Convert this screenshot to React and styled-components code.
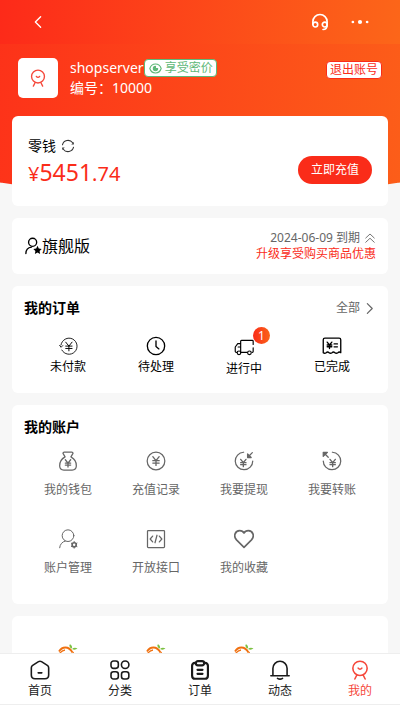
import React from "react";
import styled, { createGlobalStyle } from "styled-components";

function Yen({ x = 12, y = 12, s = 1, w = 1.3 }) {
  return (
    <path
      d="M-4 -5 L0 0 L4 -5 M0 0 V6 M-4 0 H4 M-4 3 H4"
      transform={`translate(${x} ${y}) scale(${s})`}
      strokeWidth={w / s}
    />
  );
}

const icons = {
  back: <path d="M15.5 5 L8.5 12 L15.5 19" />,
  more: (
    <g fill="currentColor" stroke="none">
      <circle cx="2.5" cy="12" r="1.8" />
      <circle cx="12" cy="12" r="2.8" />
      <circle cx="21.5" cy="12" r="1.8" />
    </g>
  ),
  headset: (
    <>
      <path d="M2.5 15 V11.5 A9.5 9.5 0 0 1 21.5 11.5 V16 C21.5 19.5 19.5 22 16 22" />
      <circle cx="5.7" cy="15.4" r="3.2" />
      <circle cx="18.3" cy="15.4" r="3.2" />
    </>
  ),
  mine: (
    <>
      <circle cx="12" cy="10" r="8.6" />
      <path d="M9.8 9.8 C11 11.6 13 11.6 14.2 9.8 M8.2 18 L5.8 22.8 M15.8 18 L18.2 22.8" />
    </>
  ),
  eye: (
    <>
      <path d="M1.5 12 C5 1 19 1 22.5 12 C19 23 5 23 1.5 12 Z" />
      <path d="M12 8 A4 4 0 1 0 16 12 H12 Z" fill="currentColor" />
    </>
  ),
  refresh: (
    <>
      <path d="M2.5 10 A9.8 9.8 0 0 1 20 6.5 M21.5 14 A9.8 9.8 0 0 1 4 17.5" />
      <path d="M22 5 V9.6 H17.6 Z M2 19 V14.4 H6.4 Z" fill="currentColor" stroke="none" />
    </>
  ),
  member: (
    <>
      <circle cx="11.5" cy="7" r="5.4" />
      <path d="M2.5 22 C2.5 17 5.5 14 10 13.4" />
      <path
        d="M18 11.8 L19.7 15.4 L23.6 15.9 L20.8 18.6 L21.5 22.6 L18 20.7 L14.5 22.6 L15.2 18.6 L12.4 15.9 L16.3 15.4 Z"
        fill="currentColor"
        stroke="none"
      />
    </>
  ),
  doubleUp: <path d="M3.5 12 L12 4 L20.5 12 M3.5 20.5 L12 12.5 L20.5 20.5" />,
  right: <path d="M8 3 L17 12 L8 21" />,
  unpaid: (
    <>
      <path d="M2.5 10 A10.2 10.2 0 1 1 3.6 16.5 M0.8 10.5 L2.6 13 L4.8 10.8" />
      <Yen x={12.5} y={11.5} w={1.2} />
    </>
  ),
  clock: (
    <>
      <circle cx="12" cy="12" r="10.4" />
      <path d="M12 6 V12.5 L15.5 15.5" />
    </>
  ),
  truck: (
    <>
      <path d="M8 18.5 V5 Q8 4 9 4 H22 Q23 4 23 5 V9 M23 13 V17.5 Q23 18.5 22 18.5 M8 8 H4.5 L1.5 12 V17.5 Q1.5 18.5 3 18.5 M9 18.5 H15.5 M5 12 H7" />
      <circle cx="6" cy="19" r="2.2" />
      <circle cx="18.5" cy="19" r="2.2" />
    </>
  ),
  receipt: (
    <>
      <path d="M1.5 20 V4.5 Q1.5 2.5 3.5 2.5 H20.5 Q22.5 2.5 22.5 4.5 V20 Q20.7 18.5 19 20 Q17.2 21.5 15.5 20 Q13.7 18.5 12 20 Q10.2 21.5 8.5 20 Q6.7 18.5 5 20 Q3.2 21.5 1.5 20 Z" />
      <Yen x={9} y={10.8} s={0.7} w={1.6} />
      <path d="M14.5 9.5 H18.5 M14.5 13 H18.5" />
    </>
  ),
  wallet: (
    <>
      <path d="M8.5 7 L6 2.8 Q6 1.2 7.5 1.2 H16.5 Q18 1.2 18 2.8 L15.5 7 C20 9.5 22.3 14 22 18 C21.8 21.5 20.3 22.8 17 22.8 H7 C3.7 22.8 2.2 21.5 2 18 C1.8 14 4 9.5 8.5 7 Z" />
      <Yen x={12} y={14.5} s={0.8} w={1.6} />
    </>
  ),
  recharge: (
    <>
      <circle cx="12" cy="12" r="10.6" />
      <Yen x={12} y={11.6} s={0.95} w={1.6} />
    </>
  ),
  withdraw: (
    <>
      <path d="M11.5 1.5 A10.5 10.5 0 1 0 22.5 12 M22 2 L18 6" />
      <path d="M16.3 3.5 V7.8 H20.6 Z" fill="currentColor" />
      <Yen x={11.2} y={14} s={0.8} w={1.6} />
    </>
  ),
  transfer: (
    <>
      <path d="M12.5 1.5 A10.5 10.5 0 1 1 1.5 12 M3 3 L7.5 7.5" />
      <path d="M1.5 1.5 H6.5 L1.5 6.5 Z" fill="currentColor" />
      <Yen x={12.8} y={14} s={0.8} w={1.6} />
    </>
  ),
  manage: (
    <>
      <circle cx="12" cy="8" r="7" />
      <path d="M2 22.5 C2.3 18.5 5 15.3 8.8 14.4" />
      <circle cx="19.4" cy="19" r="2.5" strokeWidth="2" />
      <path d="M19.4 15 V16 M19.4 22 V23 M16 17 L17 17.6 M22.8 17 L21.8 17.6 M16 21 L17 20.4 M22.8 21 L21.8 20.4" />
    </>
  ),
  api: (
    <>
      <rect x="1.8" y="1.8" width="20.4" height="20.4" rx="1" />
      <path d="M8 8.5 L5 12 L8 15.5 M16 8.5 L19 12 L16 15.5 M13.2 7.5 L10.8 16.5" />
    </>
  ),
  heart: (
    <path d="M12 22 L3 13 C-1.2 8.5 1.4 2 6.8 2 C9.2 2 11 2.9 12 4.8 C13 2.9 14.8 2 17.2 2 C22.6 2 25.2 8.5 21 13 Z" />
  ),
  home: (
    <path d="M10.2 2 L3.2 6.4 Q1.6 7.4 1.6 9.4 V18 Q1.6 22.4 6 22.4 H18 Q22.4 22.4 22.4 18 V9.4 Q22.4 7.4 20.8 6.4 L13.8 2 Q12 0.9 10.2 2 Z M9.8 15.4 H14.2" />
  ),
  grid: (
    <>
      <rect x="1.2" y="1.2" width="8.8" height="8.8" rx="3" />
      <circle cx="18.2" cy="5.6" r="4.5" />
      <rect x="1.2" y="14" width="8.8" height="8.8" rx="3" />
      <rect x="13.8" y="14" width="8.8" height="8.8" rx="3" />
    </>
  ),
  clipboard: (
    <>
      <path d="M7 3.5 H6 Q2.5 3.5 2.5 7 V18.5 Q2.5 22.5 6 22.5 H18 Q21.5 22.5 21.5 18.5 V7 Q21.5 3.5 18 3.5 H17" />
      <rect x="7" y="1.4" width="10" height="5" rx="2.5" />
      <path d="M9 11.8 H15 M9 16.6 H15" />
    </>
  ),
  bell: (
    <path d="M1 18.8 H23 M3.5 18.5 V10 A8.5 8.5 0 0 1 20.5 10 V18.5 M9 22 Q12 24 15 22" />
  ),
};

function Icon({ name, size = 20, stroke = 1.5 }) {
  return (
    <Svg viewBox="0 0 24 24" width={size} height={size} strokeWidth={stroke} aria-hidden="true">
      {icons[name]}
    </Svg>
  );
}

function Fruit() {
  return (
    <svg viewBox="0 0 20 20" width="20" height="20" aria-hidden="true">
      <path d="M1 7.5 C4 2.5 10.5 1.5 14.5 8.5" fill="none" stroke="#f07010" strokeWidth="1.8" />
      <path d="M1.5 9.5 C3.5 7 5 6.3 7 6 M15 8 C17.5 14 14 18 9.5 18 C5 18 3 15 3 12" fill="none" stroke="#f07010" strokeWidth="1.3" />
      <path d="M12.5 4 Q10.5 1.5 12 0.3 Q14.5 1.5 14 4.5 Z M14 5 Q16.5 2.8 19.5 4.5 Q17 6.5 14 5 Z" fill="#7cc142" />
    </svg>
  );
}

const orders = [
  { icon: "unpaid", label: "未付款", size: 19, stroke: 1.1 },
  { icon: "clock", label: "待处理", size: 20, stroke: 1.6 },
  { icon: "truck", label: "进行中", size: 20, stroke: 1.4, badge: 1 },
  { icon: "receipt", label: "已完成", size: 20, stroke: 1.6 },
];

const account = [
  { icon: "wallet", label: "我的钱包" },
  { icon: "recharge", label: "充值记录" },
  { icon: "withdraw", label: "我要提现" },
  { icon: "transfer", label: "我要转账" },
  { icon: "manage", label: "账户管理", stroke: 1.2 },
  { icon: "api", label: "开放接口" },
  { icon: "heart", label: "我的收藏", stroke: 2 },
];

const tabs = [
  { icon: "home", label: "首页" },
  { icon: "grid", label: "分类" },
  { icon: "clipboard", label: "订单", stroke: 2.6 },
  { icon: "bell", label: "动态" },
  { icon: "mine", label: "我的", active: true },
];

function App() {
  return (
    <>
      <GlobalStyle />
      <Page>
        <Header>
          <HeaderButton aria-label="返回">
            <Icon name="back" size={18} stroke={1.8} />
          </HeaderButton>
          <HeaderActions>
            <HeaderButton aria-label="客服">
              <Icon name="headset" size={18} stroke={2.2} />
            </HeaderButton>
            <HeaderButton aria-label="更多">
              <Icon name="more" size={18} />
            </HeaderButton>
          </HeaderActions>
        </Header>
        <Main>
          <Hero>
            <UserRow>
              <Avatar>
                <Icon name="mine" size={18} stroke={1.8} />
              </Avatar>
              <UserInfo>
                <UserLine>
                  shopserver
                  <Tag $color="#5fb878">
                    <Icon name="eye" size={13} stroke={2} />
                    享受密价
                  </Tag>
                </UserLine>
                <UserLine>编号：10000</UserLine>
              </UserInfo>
              <LogoutButton>退出账号</LogoutButton>
            </UserRow>
            <WalletCard>
              <div>
                <WalletTitle>
                  零钱
                  <PlainButton aria-label="刷新">
                    <Icon name="refresh" size={14} stroke={1.8} />
                  </PlainButton>
                </WalletTitle>
                <Amount>
                  ¥<Big>5451</Big>.74
                </Amount>
              </div>
              <RechargeButton>立即充值</RechargeButton>
            </WalletCard>
          </Hero>

          <Cards>
            <LevelCard>
              <LevelName>
                <Icon name="member" size={18} stroke={1.8} />
                旗舰版
              </LevelName>
              <LevelInfo>
                <Expire>
                  2024-06-09 到期
                  <Icon name="doubleUp" size={12} stroke={1.8} />
                </Expire>
                <Upgrade href="#upgrade">升级享受购买商品优惠</Upgrade>
              </LevelInfo>
            </LevelCard>

            <Card>
              <CardHead>
                <Title>我的订单</Title>
                <AllLink href="#orders">
                  全部
                  <Icon name="right" size={13} stroke={2.2} />
                </AllLink>
              </CardHead>
              <OrderGrid>
                {orders.map((item) => (
                  <Entry key={item.label} href="#order">
                    <IconBox $tall={!!item.badge}>
                      <Icon name={item.icon} size={item.size} stroke={item.stroke} />
                      {item.badge && <Badge>{item.badge}</Badge>}
                    </IconBox>
                    {item.label}
                  </Entry>
                ))}
              </OrderGrid>
            </Card>

            <Card>
              <CardHead>
                <Title>我的账户</Title>
              </CardHead>
              <AccountGrid>
                {account.map((item) => (
                  <Entry key={item.label} href="#account" $muted>
                    <IconBox>
                      <Icon name={item.icon} size={20} stroke={item.stroke} />
                    </IconBox>
                    {item.label}
                  </Entry>
                ))}
              </AccountGrid>
            </Card>

            <Card>
              <FruitGrid>
                <Fruit />
                <Fruit />
                <Fruit />
              </FruitGrid>
            </Card>
          </Cards>
        </Main>
        <TabBar>
          {tabs.map((tab) => (
            <Tab key={tab.label} href="#tab" $active={tab.active}>
              <Icon name={tab.icon} size={20} stroke={tab.stroke || 1.9} />
              <span>{tab.label}</span>
            </Tab>
          ))}
        </TabBar>
      </Page>
    </>
  );
}

const GlobalStyle = createGlobalStyle`
  * {
    box-sizing: border-box;
  }
  body {
    margin: 0;
    background: #f7f7f7;
    color: #000;
    font: 400 14px/20px "Noto Sans", "Noto Sans CJK SC", sans-serif;
  }
  button {
    border: 0;
    padding: 0;
    background: none;
    color: inherit;
    font: inherit;
    cursor: pointer;
  }
  a {
    color: inherit;
    text-decoration: none;
  }
`;

const Svg = styled.svg`
  display: block;
  flex: none;
  fill: none;
  stroke: currentColor;
  stroke-linecap: round;
  stroke-linejoin: round;
`;

const Page = styled.div`
  display: flex;
  flex-direction: column;
  height: 100vh;
`;

const Header = styled.header`
  display: flex;
  align-items: center;
  justify-content: space-between;
  height: 44px;
  flex: none;
  padding: 0 31px 0 29px;
  color: #fff;
  background: linear-gradient(95deg, #fd2a19, #fc6619);
`;

const HeaderActions = styled.div`
  display: flex;
  gap: 22px;
`;

const HeaderButton = styled.button`
  display: block;
`;

const PlainButton = styled.button`
  display: flex;
  color: #333;
`;

const Main = styled.main`
  flex: 1;
  min-height: 0;
  overflow-y: auto;
  scrollbar-width: none;
`;

const Hero = styled.section`
  position: relative;
  overflow: hidden;
  padding: 14px 12px 0;

  &::before {
    content: "";
    position: absolute;
    top: 0;
    bottom: 10px;
    left: -20%;
    width: 140%;
    background: linear-gradient(95deg, #fd2a19, #fc6619);
    border-radius: 0 0 50% 50% / 0 0 45px 45px;
  }
`;

const UserRow = styled.div`
  position: relative;
  display: flex;
  align-items: flex-start;
  gap: 12px;
  padding: 0 6px 18px;
  color: #fff;
`;

const Avatar = styled.div`
  display: flex;
  align-items: center;
  justify-content: center;
  width: 40px;
  height: 40px;
  border-radius: 5px;
  background: #fff;
  color: #f5483b;
`;

const UserInfo = styled.div`
  flex: 1;
`;

const UserLine = styled.div`
  display: flex;
  align-items: center;
`;

const Tag = styled.span`
  display: flex;
  align-items: center;
  gap: 3px;
  height: 18px;
  padding: 0 3px 0 4px;
  border: 1px solid ${(props) => props.$color};
  border-radius: 4px;
  background: #fff;
  color: ${(props) => props.$color};
  font-size: 12px;
  line-height: 16px;
`;

const LogoutButton = styled.button`
  height: 18px;
  margin-top: 3px;
  padding: 0 3px;
  border: 1px solid #fa2c19;
  border-radius: 4px;
  background: #fff;
  color: #fa2c19;
  font-size: 12px;
  line-height: 16px;
`;

const WalletCard = styled.div`
  position: relative;
  display: flex;
  align-items: flex-end;
  justify-content: space-between;
  padding: 20px 16px 22px;
  border-radius: 6px;
  background: #fff;
`;

const WalletTitle = styled.div`
  display: flex;
  align-items: center;
  gap: 5px;
`;

const Amount = styled.div`
  display: flex;
  align-items: baseline;
  height: 28px;
  color: #fa2c19;
  font-size: 20px;
  line-height: 28px;
`;

const Big = styled.span`
  font-size: 23px;
  line-height: 32px;
`;

const RechargeButton = styled.button`
  height: 28px;
  padding: 0 13px;
  border-radius: 14px;
  background: #fa2c19;
  color: #fff;
  font-size: 12px;
`;

const Cards = styled.div`
  display: flex;
  flex-direction: column;
  gap: 12px;
  padding: 12px;
`;

const Card = styled.section`
  padding: 12px 12px 16px;
  border-radius: 6px;
  background: #fff;
`;

const LevelCard = styled(Card)`
  display: flex;
  align-items: center;
  justify-content: space-between;
  padding: 12px;
`;

const LevelName = styled.div`
  display: flex;
  align-items: center;
  font-size: 16px;
`;

const LevelInfo = styled.div`
  display: flex;
  flex-direction: column;
  align-items: flex-end;
  font-size: 12px;
  line-height: 16px;
`;

const Expire = styled.div`
  display: flex;
  align-items: center;
  gap: 4px;
  color: #666;
`;

const Upgrade = styled.a`
  color: #fa2c19;
`;

const CardHead = styled.div`
  display: flex;
  align-items: center;
  justify-content: space-between;
`;

const Title = styled.h2`
  margin: 0;
  font-size: 14px;
  font-weight: 700;
`;

const AllLink = styled.a`
  display: flex;
  align-items: center;
  gap: 3px;
  color: #666;
  font-size: 12px;
`;

const OrderGrid = styled.nav`
  display: grid;
  grid-template-columns: repeat(4, 1fr);
  align-items: start;
  padding-top: 18px;

  a {
    gap: 3px;
  }
`;

const AccountGrid = styled.nav`
  display: grid;
  grid-template-columns: repeat(4, 1fr);
  row-gap: 31px;
  padding: 14px 0 12px;

  a {
    gap: 11px;
  }
`;

const FruitGrid = styled.div`
  display: grid;
  grid-template-columns: repeat(4, 1fr);
  justify-items: center;
  padding: 16px 0;
`;

const Entry = styled.a`
  display: flex;
  flex-direction: column;
  align-items: center;
  color: ${(props) => (props.$muted ? "#666" : "#000")};
  font-size: 12px;
  line-height: 16px;
`;

const IconBox = styled.span`
  position: relative;
  display: flex;
  align-items: center;
  justify-content: center;
  height: ${(props) => (props.$tall ? "22px" : "20px")};
`;

const Badge = styled.span`
  position: absolute;
  top: -9px;
  left: 100%;
  width: 17px;
  height: 17px;
  margin-left: -1px;
  border-radius: 50%;
  background: linear-gradient(90deg, #fa2c19, #fa6419);
  color: #fff;
  font-size: 12px;
  line-height: 17px;
  text-align: center;
`;

const TabBar = styled.nav`
  display: grid;
  grid-template-columns: repeat(5, 1fr);
  flex: none;
  height: 52px;
  border-top: 1px solid #eee;
  border-bottom: 1px solid #eee;
  background: #fff;
`;

const Tab = styled.a`
  display: flex;
  flex-direction: column;
  align-items: center;
  gap: 3px;
  padding-top: 6px;
  color: ${(props) => (props.$active ? "#f5483b" : "#1a1a1a")};
  font-size: 12px;
  line-height: 16px;
`;

export default App;
